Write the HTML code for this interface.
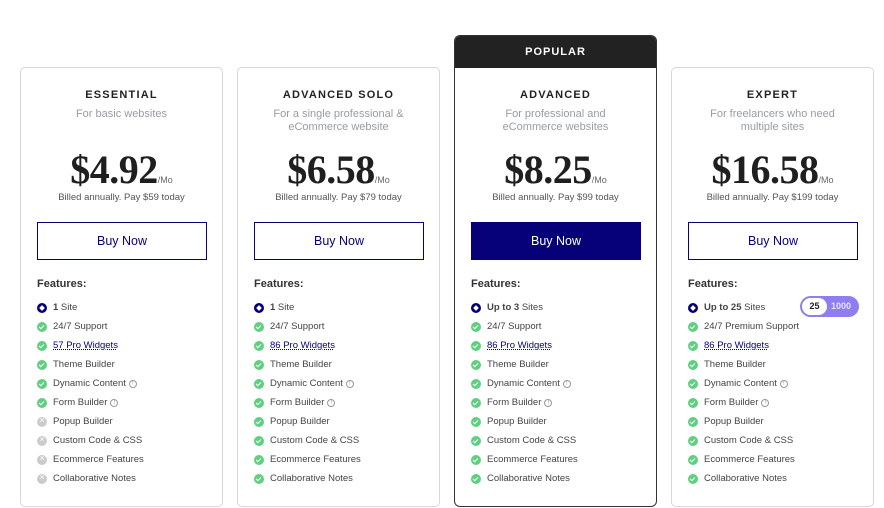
<!DOCTYPE html>
<html><head><style>
*{box-sizing:border-box;margin:0;padding:0}
body{width:884px;height:507px;background:#fff;font-family:"Liberation Sans",sans-serif;position:relative;overflow:hidden;color:#333}
.card{position:absolute;top:67px;width:203px;height:440px;border:1px solid #d5d8dc;border-radius:5px;background:#fff}
.pop{top:35px;height:472px;border:1px solid #333;border-radius:6px}
.ph{height:32px;background:#222;color:#fff;font-weight:bold;font-size:11px;letter-spacing:1px;text-align:center;line-height:32px;border-radius:5px 5px 0 0}
.in{position:relative;height:100%}
.t{position:absolute;top:21px;width:100%;text-align:center;font-weight:bold;font-size:11px;letter-spacing:1.2px;color:#222}
.d{position:absolute;top:40px;width:100%;text-align:center;font-size:11px;color:#989ca3;line-height:13px;padding:0 20px}
.p{position:absolute;top:78px;width:100%;text-align:center;font-family:"Liberation Serif",serif;font-weight:bold;font-size:40px;color:#1f1f1f;letter-spacing:-0.5px}
.p small{font-family:"Liberation Sans",sans-serif;font-weight:normal;font-size:9px;color:#666;letter-spacing:0}
.b{position:absolute;top:124px;width:100%;text-align:center;font-size:9.5px;color:#555}
.btn{position:absolute;top:154px;left:16px;width:170px;height:38px;border:1px solid #060079;color:#060079;text-align:center;line-height:36px;font-size:12.5px}
.pop .btn{background:#060079;color:#fff}
.f{position:absolute;top:210px;left:16px;font-weight:bold;font-size:11px;color:#333}
ul{position:absolute;top:230px;left:16px;list-style:none;font-size:9.5px;color:#444}
li{height:19px;display:flex;align-items:center}
.i{width:10px;height:10px;border-radius:50%;margin-right:6px;flex:none;position:relative}
.g{background:#5fcf80}.g:after{content:"";position:absolute;left:3px;top:2px;width:2px;height:4px;border:solid #fff;border-width:0 1.3px 1.3px 0;transform:rotate(45deg)}
.x{background:#c9cbce}.x:after{content:"×";position:absolute;left:0;top:-2px;width:10px;text-align:center;color:#fff;font-size:9px}
.n{background:#060079}.n:after{content:"";position:absolute;left:3px;top:3px;width:4px;height:4px;background:#fff;transform:rotate(45deg)}
a{color:#060079;text-decoration:underline dotted}
.q{display:inline-block;width:8px;height:8px;border:1px solid #999;border-radius:50%;margin-left:3px;font-size:6px;line-height:6px;text-align:center;color:#999}
.tog{position:absolute;left:128px;top:228px;width:59px;height:21px;border-radius:11px;background:#8f7ef0;font-size:9px;font-weight:bold;color:#fff}
.tog span{position:absolute;left:2px;top:2px;width:25px;height:17px;border-radius:9px;background:#fff;color:#222;text-align:center;line-height:17px}
.tog em{position:absolute;left:31px;top:0;line-height:21px;font-style:normal;color:#e8e4ff}
</style></head><body>

<div class="card" style="left:20px"><div class="in">
<div class="t">ESSENTIAL</div><div class="d">For basic websites</div>
<div class="p">$4.92<small>/Mo</small></div><div class="b">Billed annually. Pay $59 today</div>
<div class="btn">Buy Now</div><div class="f">Features:</div>
<ul><li><i class="i n"></i><b>1</b>&nbsp;Site</li><li><i class="i g"></i>24/7 Support</li><li><i class="i g"></i><a>57 Pro Widgets</a></li><li><i class="i g"></i>Theme Builder</li><li><i class="i g"></i>Dynamic Content<span class="q">!</span></li><li><i class="i g"></i>Form Builder<span class="q">!</span></li><li><i class="i x"></i>Popup Builder</li><li><i class="i x"></i>Custom Code &amp; CSS</li><li><i class="i x"></i>Ecommerce Features</li><li><i class="i x"></i>Collaborative Notes</li></ul>
</div></div>

<div class="card" style="left:237px"><div class="in">
<div class="t">ADVANCED SOLO</div><div class="d">For a single professional &amp; eCommerce website</div>
<div class="p">$6.58<small>/Mo</small></div><div class="b">Billed annually. Pay $79 today</div>
<div class="btn">Buy Now</div><div class="f">Features:</div>
<ul><li><i class="i n"></i><b>1</b>&nbsp;Site</li><li><i class="i g"></i>24/7 Support</li><li><i class="i g"></i><a>86 Pro Widgets</a></li><li><i class="i g"></i>Theme Builder</li><li><i class="i g"></i>Dynamic Content<span class="q">!</span></li><li><i class="i g"></i>Form Builder<span class="q">!</span></li><li><i class="i g"></i>Popup Builder</li><li><i class="i g"></i>Custom Code &amp; CSS</li><li><i class="i g"></i>Ecommerce Features</li><li><i class="i g"></i>Collaborative Notes</li></ul>
</div></div>

<div class="card pop" style="left:454px"><div class="ph">POPULAR</div><div class="in" style="height:440px">
<div class="t">ADVANCED</div><div class="d">For professional and eCommerce websites</div>
<div class="p">$8.25<small>/Mo</small></div><div class="b">Billed annually. Pay $99 today</div>
<div class="btn">Buy Now</div><div class="f">Features:</div>
<ul><li><i class="i n"></i><b>Up to 3</b>&nbsp;Sites</li><li><i class="i g"></i>24/7 Support</li><li><i class="i g"></i><a>86 Pro Widgets</a></li><li><i class="i g"></i>Theme Builder</li><li><i class="i g"></i>Dynamic Content<span class="q">!</span></li><li><i class="i g"></i>Form Builder<span class="q">!</span></li><li><i class="i g"></i>Popup Builder</li><li><i class="i g"></i>Custom Code &amp; CSS</li><li><i class="i g"></i>Ecommerce Features</li><li><i class="i g"></i>Collaborative Notes</li></ul>
</div></div>

<div class="card" style="left:671px"><div class="in">
<div class="t">EXPERT</div><div class="d">For freelancers who need multiple sites</div>
<div class="p">$16.58<small>/Mo</small></div><div class="b">Billed annually. Pay $199 today</div>
<div class="btn">Buy Now</div><div class="f">Features:</div>
<ul><li><i class="i n"></i><b>Up to 25</b>&nbsp;Sites</li><li><i class="i g"></i>24/7 Premium Support</li><li><i class="i g"></i><a>86 Pro Widgets</a></li><li><i class="i g"></i>Theme Builder</li><li><i class="i g"></i>Dynamic Content<span class="q">!</span></li><li><i class="i g"></i>Form Builder<span class="q">!</span></li><li><i class="i g"></i>Popup Builder</li><li><i class="i g"></i>Custom Code &amp; CSS</li><li><i class="i g"></i>Ecommerce Features</li><li><i class="i g"></i>Collaborative Notes</li></ul>
<div class="tog"><span>25</span><em>1000</em></div>
</div></div>

</body></html>
